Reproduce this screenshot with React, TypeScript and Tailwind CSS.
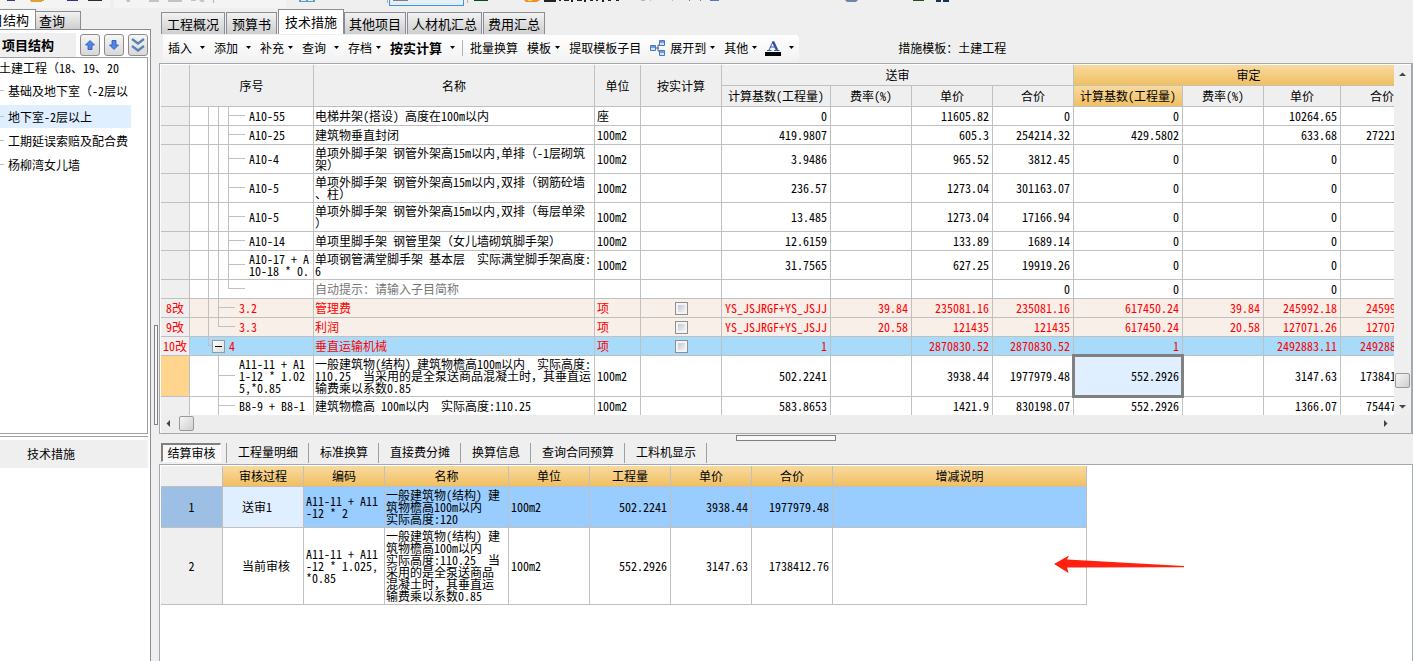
import { type ReactNode } from "react"
import clsx from "clsx"

type Guide = "line" | "end" | "none"

type Row = {
  mark?: string
  height: string
  guides: Guide[]
  stub?: boolean
  box?: boolean
  code: string
  name: string
  unit?: string
  check?: boolean
  values: string[]
  tone?: "pink" | "blue" | "active" | "hint"
}

const rows: Row[] = [
  { height: "h-[18px]", guides: ["line", "line", "line"], stub: true, code: "A10-55", name: "电梯井架(搭设) 高度在100m以内", unit: "座", values: ["0", "", "11605.82", "0", "0", "", "10264.65", ""] },
  { height: "h-[18px]", guides: ["line", "line", "line"], stub: true, code: "A10-25", name: "建筑物垂直封闭", unit: "100m2", values: ["419.9807", "", "605.3", "254214.32", "429.5802", "", "633.68", "272216.25"] },
  { height: "h-[28px]", guides: ["line", "line", "line"], stub: true, code: "A10-4", name: "单项外脚手架 钢管外架高15m以内,单排（-1层砌筑\n架）", unit: "100m2", values: ["3.9486", "", "965.52", "3812.45", "0", "", "0", ""] },
  { height: "h-[28px]", guides: ["line", "line", "line"], stub: true, code: "A10-5", name: "单项外脚手架 钢管外架高15m以内,双排（钢筋砼墙\n、柱）", unit: "100m2", values: ["236.57", "", "1273.04", "301163.07", "0", "", "0", ""] },
  { height: "h-[28px]", guides: ["line", "line", "line"], stub: true, code: "A10-5", name: "单项外脚手架 钢管外架高15m以内,双排（每层单梁\n）", unit: "100m2", values: ["13.485", "", "1273.04", "17166.94", "0", "", "0", ""] },
  { height: "h-[18px]", guides: ["line", "line", "line"], stub: true, code: "A10-14", name: "单项里脚手架 钢管里架（女儿墙砌筑脚手架）", unit: "100m2", values: ["12.6159", "", "133.89", "1689.14", "0", "", "0", ""] },
  { height: "h-[28px]", guides: ["line", "line", "line"], stub: true, code: "A10-17 + A\n10-18 * 0.", name: "单项钢管满堂脚手架 基本层  实际满堂脚手架高度:\n6", unit: "100m2", values: ["31.7565", "", "627.25", "19919.26", "0", "", "0", ""] },
  { height: "h-[18px]", guides: ["line", "line", "end"], stub: true, code: "", name: "自动提示：请输入子目简称", values: ["", "", "", "0", "0", "", "0", ""], tone: "hint" },
  { mark: "8改", height: "h-[18px]", guides: ["line", "line"], stub: true, code: "3.2", name: "管理费", unit: "项", check: true, values: ["YS_JSJRGF+YS_JSJJ", "39.84", "235081.16", "235081.16", "617450.24", "39.84", "245992.18", "245992.18"], tone: "pink" },
  { mark: "9改", height: "h-[18px]", guides: ["line", "end"], stub: true, code: "3.3", name: "利润", unit: "项", check: true, values: ["YS_JSJRGF+YS_JSJJ", "20.58", "121435", "121435", "617450.24", "20.58", "127071.26", "127071.26"], tone: "pink" },
  { mark: "10改", height: "h-[18px]", guides: ["end"], box: true, code: "4", name: "垂直运输机械", unit: "项", check: true, values: ["1", "", "2870830.52", "2870830.52", "1", "", "2492883.11", "2492883.11"], tone: "blue" },
  { height: "h-[40px]", guides: ["none", "line"], stub: true, code: "A11-11 + A1\n1-12 * 1.02\n5,*0.85", name: "一般建筑物(结构) 建筑物檐高100m以内  实际高度:\n110.25  当采用的是全泵送商品混凝土时，其垂直运\n输费乘以系数0.85", unit: "100m2", values: ["502.2241", "", "3938.44", "1977979.48", "552.2926", "", "3147.63", "1738412.76"], tone: "active" },
  { height: "h-[18px]", guides: ["none", "line"], stub: true, code: "B8-9 + B8-1", name: "建筑物檐高 100m以内  实际高度:110.25", unit: "100m2", values: ["583.8653", "", "1421.9", "830198.07", "552.2926", "", "1366.07", "754470.42"] },
]

const auditRows = [
  { id: "1", step: "送审1", code: "A11-11 + A11\n-12 * 2", name: "一般建筑物(结构) 建\n筑物檐高100m以内\n实际高度:120", qty: "502.2241", price: "3938.44", total: "1977979.48", active: true, height: "h-[41px]" },
  { id: "2", step: "当前审核", code: "A11-11 + A11\n-12 * 1.025,\n*0.85", name: "一般建筑物(结构) 建\n筑物檐高100m以内\n实际高度:110.25  当\n采用的是全泵送商品\n混凝土时，其垂直运\n输费乘以系数0.85", qty: "552.2926", price: "3147.63", total: "1738412.76", active: false, height: "h-[77px]" },
]

const cell = "border-r border-b border-[#c0c0c0] p-0"
const head = cell + " font-normal text-center"
const gold = "bg-linear-to-b from-[#f9d99f] to-[#f0c060]"

const Caret = () => (
  <svg width="5" height="3" viewBox="0 0 5 3" className="shrink-0">
    <path d="M0 0h5L2.5 3z" fill="#000" />
  </svg>
)

const Tool = ({ children, wide, arrow = true }: { children: ReactNode; wide?: boolean; arrow?: boolean }) => (
  <button className={clsx("flex items-center whitespace-nowrap", wide ? "gap-2" : "gap-1")}>
    {children}
    {arrow && <Caret />}
  </button>
)

/* bottom edge of the main icon bar */
const IconStrip = () => (
  <svg width="1000" height="9" viewBox="0 0 1000 9" className="block">
    <rect x="0" y="0" width="110" height="8" fill="#f4f4f4" />
    <rect x="114" y="0" width="172" height="8" fill="#f4f4f4" />
    <rect x="7" y="0" width="8" height="1" fill="#3a3a78" />
    <path d="M30 0h14v1h-2v1h-11z" fill="#e0a030" />
    <rect x="67" y="0" width="11" height="1" fill="#34348c" />
    <rect x="88" y="0" width="14" height="1" fill="#3c2820" />
    <path d="M126 0h4v2h-3zM149 0h10v2h-10zM168 0h14v2h-14zM191 0h5v1h-5zM199 0h5v2h-3z" fill="#c4c4c4" />
    <rect x="213" y="0" width="1" height="3" fill="#b0b0b0" />
    <path d="M299 0h16v2h-16z" fill="#5b9bd0" />
    <path d="M301 0h5v1h-5zM308 0h5v1h-5z" fill="#dff0d8" />
    <rect x="387" y="0" width="1" height="3" fill="#b0b0b0" />
    <rect x="389.5" y="-3.5" width="74" height="9" fill="#e5eef9" stroke="#3d96e8" />
    <rect x="393" y="0" width="15" height="1" fill="#808088" />
    <rect x="467" y="0" width="1" height="3" fill="#b0b0b0" />
    <rect x="474" y="0" width="14" height="1" fill="#0c4a14" />
    <path d="M524 0h16l-3 2h-11z" fill="#f09020" />
    <path d="M528 0h4v1h-4z" fill="#ffe060" />
    <path d="M544 0h12v2h-12zM559 0h2v1h-2zM564 0h5v1h-5zM571 0h2v2h-2zM577 0h5v1h-5zM584 0h2v2h-2zM590 0h3v1h-3zM596 0h2v1h-2zM602 0h2v2h-2zM608 0h3v1h-3zM616 0h3v1h-3z" fill="#222" />
    <path d="M641 0h4v1h-4zM650 0h1v1h-1zM672 0h1v1h-1z" fill="#b8b8b8" />
    <path d="M689 0h1v1h-1zM700 0h1v1h-1zM710 0h9v1h-9z" fill="#5878c0" />
    <path d="M845 0h13l-2 2h-9z" fill="#6d86ae" />
    <rect x="913" y="0" width="11" height="1" fill="#2b4a22" />
    <path d="M936 0h5v2h-5zM943 0h6v2h-6z" fill="#1c3050" />
  </svg>
)

const Tree = ({ row }: { row: Row }) => (
  <div className={clsx("flex items-stretch pl-[18px]", row.height)}>
    {row.guides.map((g, i) => {
      const last = i === row.guides.length - 1
      return (
        <span key={i} className={clsx("flex shrink-0 flex-col", last && row.stub ? "w-[17px]" : row.box ? "w-1" : "w-[10px]")}>
          <span className={clsx("h-1/2 border-[#c0c0c0]", g !== "none" && "border-l", last && "border-b")}></span>
          <span className={clsx("h-1/2 border-[#c0c0c0]", g === "line" && "border-l")}></span>
        </span>
      )
    })}
    {row.box && (
      <button aria-label="收起" className="flex size-[13px] shrink-0 items-center justify-center self-center border border-[#999] bg-linear-to-br from-white to-[#dcdcdc]">
        <span className="h-px w-[7px] bg-black"></span>
      </button>
    )}
    <span className="self-center whitespace-pre pl-1 leading-3">{row.code}</span>
  </div>
)

const LeftPanel = () => (
  <aside className="flex w-[151px] shrink-0 flex-col overflow-hidden">
    <div className="flex h-5 items-end">
      <button className="flex h-5 w-9 justify-end border-t border-r border-[#8b8c94] bg-white pt-[2px] pr-[6px] text-[13px] leading-4 whitespace-nowrap">项目结构</button>
      <button className="h-[18px] w-[45px] border border-b-0 border-l-0 border-[#8b8c94] bg-linear-to-b from-[#f2f2f2] to-[#cecece] pr-3 text-[13px] leading-4">查询</button>
    </div>
    <div className="flex flex-1 flex-col border-t border-r border-[#8b8c94] bg-white pt-[3px] pr-[2px]">
      <div className="flex h-6 items-center gap-1">
        <h2 className="h-full flex-1 bg-[#efefef] pl-[2px] text-[13px] leading-6 font-bold">项目结构</h2>
        {["上移", "下移", "展开"].map((label, i) => (
          <button key={label} aria-label={label} className="flex h-[22px] w-5 items-center justify-center rounded-[3px] border border-[#8c8c8c] bg-linear-to-b from-[#f6f6f6] to-[#d8d8d8]">
            {i < 2 && (
              <svg width="10" height="10" viewBox="0 0 10 10" className={i === 1 ? "rotate-180" : ""}>
                <path d="M5 .5 9.5 5H7v4.5H3V5H.5z" fill="#4f86ea" stroke="#2453b8" strokeWidth=".8" />
              </svg>
            )}
            {i === 2 && (
              <svg width="14" height="16" viewBox="0 0 14 16" fill="none" stroke="#5880b4" strokeWidth="2.2">
                <path d="M1 2l6 4.500 6-4.500M1 9l6 4.500 6-4.500" />
              </svg>
            )}
          </button>
        ))}
      </div>
      <ul className="flex h-[377px] flex-col gap-px border-t border-r border-b border-[#a0a0a0] whitespace-nowrap">
        <li className="-ml-px h-5 leading-5">土建工程（18、19、20</li>
        {["基础及地下室（-2层以", "地下室-2层以上", "工期延误索赔及配合费", "杨柳湾女儿墙"].map((t, i) => (
          <li key={t} className={clsx("mr-4 flex h-[23px] items-center gap-1", i === 1 && "mt-[2px] bg-[#e0efff]")}>
            <span className="h-px w-1 bg-[#c0c0c0]"></span>
            <a href="#" className="leading-[22px]">{t}</a>
          </li>
        ))}
      </ul>
      <div className="mt-[2px] border-t border-[#a0a0a0] pt-[3px]">
        <h3 className="h-7 bg-[#efefef] pl-[27px] leading-7">技术措施</h3>
      </div>
    </div>
  </aside>
)

const MainTabs = () => (
  <nav className="flex h-[25px] items-end pl-[2px] text-[13px]">
    {["工程概况", "预算书", "技术措施", "其他项目", "人材机汇总", "费用汇总"].map((t, i) => (
      <button
        key={t}
        className={clsx(
          "border border-b-0 border-[#8b8c94] whitespace-nowrap",
          i === 2 ? "h-[25px] bg-white px-[6px] leading-6" : "mr-px h-[22px] bg-linear-to-b from-[#f2f2f2] to-[#cecece] leading-[22px]",
          i < 2 && "px-[5px]",
          i > 2 && "px-1"
        )}
      >
        {t}
      </button>
    ))}
  </nav>
)

const Toolbar = () => (
  <div className="flex h-[29px] items-center pb-[2px] pl-1">
    <div className="flex h-[26px] items-center gap-[9px] rounded-r bg-linear-to-b from-white to-[#f2f2f2] px-[5px]">
      <Tool wide>插入</Tool>
      <Tool wide>添加</Tool>
      <Tool>补充</Tool>
      <Tool wide>查询</Tool>
      <Tool>存档</Tool>
      <Tool wide><b className="text-[13px]">按实计算</b></Tool>
      <span className="-mx-[2px] h-4 w-px bg-[#b4b4b4]"></span>
      <Tool arrow={false}>批量换算</Tool>
      <Tool>模板</Tool>
      <Tool arrow={false}>提取模板子目</Tool>
      <Tool>
        <svg width="16" height="16" viewBox="0 0 16 16">
          <path d="M6 8h3M8 5v6M8 5h3M8 11h3" stroke="#3f5f98" fill="none" />
          <path d="M.5 5.500h5v5h-5zM9.500 .5h5v5h-5zM9.500 10.500h5v5h-5z" fill="#cfe3fa" stroke="#4a76c0" />
          <path d="M1 6h4v2H1zM10 1h4v2h-4zM10 11h4v2h-4z" fill="#6fa0e4" />
        </svg>
        展开到
      </Tool>
      <Tool>其他</Tool>
      <Tool wide>
        <svg width="16" height="16" viewBox="0 0 16 16" className="-ml-px">
          <path d="M4 10 8 1.500" stroke="#5a7cc0" strokeWidth="1.200" fill="none" />
          <path d="M8 1.500 12 10" stroke="#2f4f98" strokeWidth="2.400" fill="none" />
          <path d="M5 7h6M2 10.500h4.500M9 10.500h5.500" stroke="#3a5ca8" fill="none" />
          <rect y="12" width="16" height="4" fill="#000" />
        </svg>
      </Tool>
    </div>
    <span className="ml-[99px] whitespace-nowrap">措施模板：土建工程</span>
  </div>
)

const CostTable = () => (
  <table className="w-[1263px] table-fixed border-separate border-spacing-0">
    <colgroup>
      <col className="w-[29px]" />
      <col className="w-[124px]" />
      <col className="w-[281px]" />
      <col className="w-[46px]" />
      <col className="w-[81px]" />
      <col className="w-[109px]" />
      <col className="w-[81px]" />
      <col className="w-[81px]" />
      <col className="w-[81px]" />
      <col className="w-[109px]" />
      <col className="w-[81px]" />
      <col className="w-[77px]" />
      <col className="w-[83px]" />
    </colgroup>
    <thead className="bg-[#efefef]">
      <tr className="h-[21px]">
        <th rowSpan={2} className={head}></th>
        <th rowSpan={2} className={head}>序号</th>
        <th rowSpan={2} className={head}>名称</th>
        <th rowSpan={2} className={head}>单位</th>
        <th rowSpan={2} className={head}>按实计算</th>
        <th colSpan={4} className={head}>送审</th>
        <th colSpan={4} className={clsx(head, gold)}>审定</th>
      </tr>
      <tr className="h-[21px]">
        {[0, 1].map((g) =>
          ["计算基数(工程量)", "费率(%)", "单价", "合价"].map((t, i) => (
            <th key={g + t} className={clsx(head, g === 1 && i === 0 && gold)}>{t}</th>
          ))
        )}
      </tr>
    </thead>
    <tbody>
      {rows.map((row, r) => (
        <tr
          key={r}
          className={clsx(
            row.tone === "pink" && "bg-[#f9efe9]",
            row.tone === "blue" && "bg-[#a8dbfa]",
            row.mark && "text-[#f00]"
          )}
        >
          <td className={clsx(cell, "text-center", row.tone === "active" ? "bg-[#ffd48c]" : "bg-[#efefef]")}>{row.mark}</td>
          <td className={cell}><Tree row={row} /></td>
          <td className={clsx(cell, "pl-px whitespace-pre", row.tone === "hint" && "text-[#777]")}>{row.name}</td>
          <td className={clsx(cell, "pl-[2px]")}>{row.unit}</td>
          <td className={cell}>
            {row.check && (
              <input
                type="checkbox"
                aria-label={row.name}
                className="mx-auto block size-[13px] appearance-none border border-[#8e8f8f] bg-linear-to-br from-[#b8bcc8] to-white shadow-[inset_0_0_0_2px_#f4f4f4]"
              />
            )}
          </td>
          {row.values.map((v, i) => (
            <td key={i} className={clsx(cell, "text-right")}>
              {row.tone === "active" && i === 4 ? (
                <div className="relative flex h-[40px] items-center justify-end bg-[#e0efff] pr-[3px] outline-3 -outline-offset-1 outline-[#808080]">{v}</div>
              ) : (
                <span className="pr-[3px]">{v}</span>
              )}
            </td>
          ))}
        </tr>
      ))}
    </tbody>
  </table>
)

const Arrow = ({ d }: { d: string }) => (
  <svg width="7" height="7" viewBox="0 0 7 7" className="shrink-0">
    <path d={d} fill="#444" />
  </svg>
)

const thumb = "size-[15px] shrink-0 rounded-[2px] border border-[#999] bg-linear-to-br from-[#f6f6f6] to-[#cfcfcf]"

const CostGrid = () => (
  <section className="flex h-[371px] flex-col border border-r-2 border-[#a7a8ad] bg-white pt-px pl-px">
    <div className="flex h-[350px]">
      <div className="min-w-0 flex-1 overflow-hidden">
        <CostTable />
      </div>
      <div className="flex w-[17px] flex-col items-center bg-[#efefef] pt-[6px] pb-[5px]">
        <Arrow d="M0 5h7L3.500 1.500z" />
        <span className="flex-1"></span>
        <span className={thumb}></span>
        <span className="h-[15px]"></span>
        <Arrow d="M0 2h7L3.500 5.500z" />
      </div>
    </div>
    <div className="flex flex-1 items-center bg-[#ededed] pr-[22px] pb-px pl-1">
      <Arrow d="M5 0v7L1.500 3.500z" />
      <span className="w-[7px]"></span>
      <span className={thumb}></span>
      <span className="flex-1"></span>
      <Arrow d="M2 0v7l3.500-3.500z" />
    </div>
  </section>
)

const DetailTabs = () => (
  <nav className="flex h-[21px] items-center pl-[2px]">
    <button className="mr-[5px] h-[19px] w-[60px] border-t-2 border-l-2 border-r border-b border-[#808080] border-r-white border-b-white bg-[#f7f7f7] leading-4 whitespace-nowrap">结算审核</button>
    {["工程量明细", "标准换算", "直接费分摊", "换算信息", "查询合同预算", "工料机显示"].map((t, i) => (
      <button key={t} className={clsx("h-5 border-l border-[#a0a0a0] pr-[10px] pb-px pl-[11px] whitespace-nowrap", i === 5 && "border-r")}>{t}</button>
    ))}
  </nav>
)

const AuditTable = () => (
  <table className="w-[926px] table-fixed border-separate border-spacing-0">
    <colgroup>
      <col className="w-[62px]" />
      <col className="w-[81px]" />
      <col className="w-[81px]" />
      <col className="w-[124px]" />
      <col className="w-[81px]" />
      <col className="w-[81px]" />
      <col className="w-[81px]" />
      <col className="w-[81px]" />
      <col className="w-[254px]" />
    </colgroup>
    <thead>
      <tr className="h-[21px]">
        <th className={clsx(head, "bg-[#efefef]")}></th>
        {["审核过程", "编码", "名称", "单位", "工程量", "单价", "合价", "增减说明"].map((t) => (
          <th key={t} className={clsx(head, gold)}>{t}</th>
        ))}
      </tr>
    </thead>
    <tbody>
      {auditRows.map((row) => (
        <tr key={row.id} className={clsx(row.height, row.active && "bg-[#99ccff]")}>
          <td className={clsx(cell, "text-center", row.active ? "bg-[#9dbfe4]" : "bg-[#efefef]")}>{row.id}</td>
          <td className={clsx(cell, "pl-[19px]", row.active && "bg-[#e0efff]")}>{row.step}</td>
          <td className={clsx(cell, "pl-[2px] whitespace-pre")}>{row.code}</td>
          <td className={clsx(cell, "pl-px whitespace-pre")}>{row.name}</td>
          <td className={clsx(cell, "pl-[2px]")}>100m2</td>
          <td className={clsx(cell, "pr-[3px] text-right")}>{row.qty}</td>
          <td className={clsx(cell, "pr-[3px] text-right")}>{row.price}</td>
          <td className={clsx(cell, "pr-[3px] text-right")}>{row.total}</td>
          <td className={cell}></td>
        </tr>
      ))}
    </tbody>
  </table>
)

export default function App() {
  return (
    <div className="flex min-h-screen flex-col overflow-hidden bg-[#efefef] font-['Noto_Sans_Mono_CJK_SC','Noto_Sans_CJK_SC',sans-serif] text-[12px] leading-3 text-black">
      <IconStrip />
      <div className="flex flex-1">
        <LeftPanel />
        <div className="w-2 shrink-0 pl-[3px]">
          <div className="mt-[316px] h-[100px] w-1 border border-[#808080] bg-[#f8f8f8]"></div>
        </div>
        <main className="flex min-w-0 flex-1 flex-col">
          <MainTabs />
          <Toolbar />
          <CostGrid />
          <div className="flex h-[30px] flex-col">
            <div className="mt-px mb-px h-[6px] w-[100px] self-center border border-[#808080] bg-[#f8f8f8]"></div>
            <DetailTabs />
          </div>
          <section className="relative flex-1 border-t border-l border-r border-[#a7a8ad] bg-white pt-px pl-px">
            <AuditTable />
            <svg width="132" height="20" viewBox="0 0 132 20" className="absolute top-[89px] left-[893px]">
              <path d="M1 10 16 1.500 14 5.500 131 12v1.300L14 13.500 15.500 19z" fill="#ff2010" />
            </svg>
          </section>
        </main>
      </div>
    </div>
  )
}
